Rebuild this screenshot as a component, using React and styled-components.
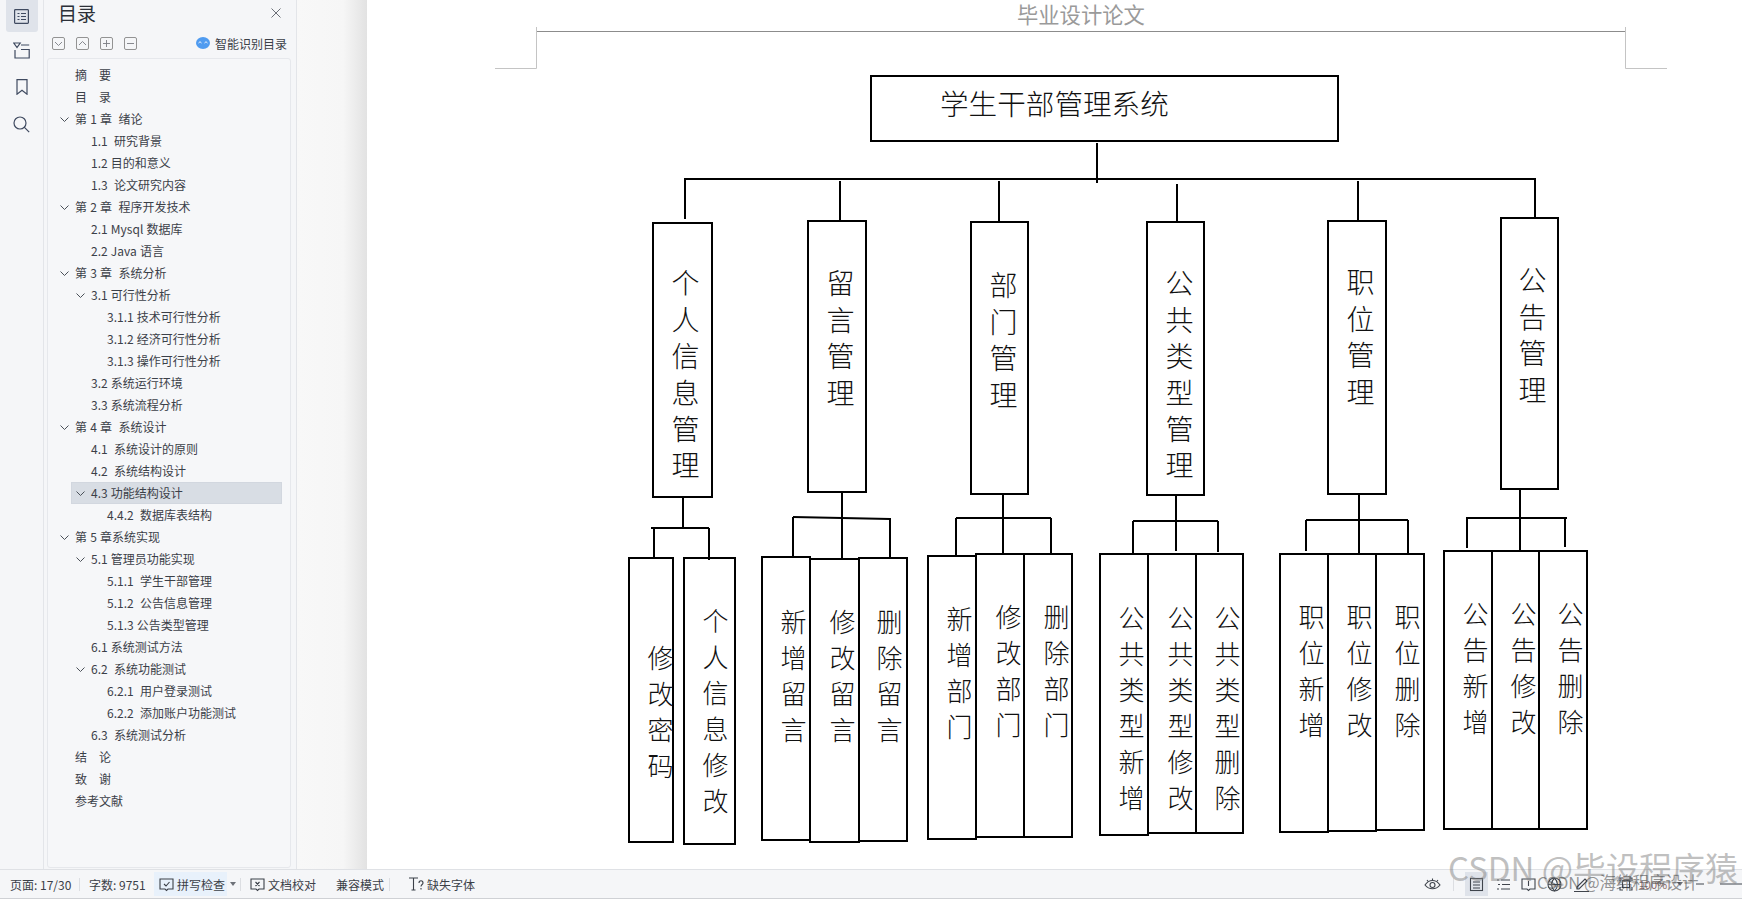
import React from "react";
import styled, { createGlobalStyle } from "styled-components";

const CJK = `"Noto Sans CJK SC", "Noto Sans", sans-serif`;

const Global = createGlobalStyle`
  html, body { margin: 0; padding: 0; height: 100%; overflow: hidden; background: #fff; }
  #root { height: 100%; }
  * { box-sizing: border-box; }
`;

const Shell = styled.div`
  width: 1742px; height: 899px; display: flex; flex-direction: column;
  font-family: ${CJK}; color: #3b4048; position: relative; overflow: hidden;
`;
const Main = styled.div` flex: 1; min-height: 0; display: flex; `;

const Rail = styled.nav`
  width: 44px; background: #f5f6f8; border-right: 1px solid #e3e5e9;
  display: flex; flex-direction: column; align-items: center; flex: none;
`;
const RailBtn = styled.div`
  width: 32px; height: ${p => p.$h}px; display: flex; align-items: center; justify-content: center;
  background: ${p => (p.$active ? "#dfe3ea" : "transparent")};
  border-radius: 0 0 3px 3px; color: #3f4a60;
`;

const Panel = styled.aside`
  width: 253px; flex: none; background: #f5f6f8; border-right: 1px solid #e3e5e9;
  display: flex; flex-direction: column; padding: 0 5px 1px 3px;
`;
const PanelHead = styled.div`
  height: 26px; display: flex; align-items: center; justify-content: space-between; padding: 0 10px 0 11px;
  color: #5b6068;
`;
const PanelTitle = styled.h1` margin: 0; font-size: 19px; font-weight: 400; color: #2c3038; line-height: 26px; `;
const PanelTools = styled.div`
  height: 32px; display: flex; align-items: center; padding: 2px 4px 0 5px; gap: 11px;
`;
const MiniBtn = styled.div`
  width: 13px; height: 13px; border: 1px solid #939393; border-radius: 2px;
  display: flex; align-items: center; justify-content: center; color: #7a7d82;
`;
const Smart = styled.div`
  margin-left: auto; display: flex; align-items: center; gap: 5px; font-size: 12px; color: #3b4048; white-space: nowrap;
`;
const TocBox = styled.div`
  flex: 1; min-height: 0; background: #f6f7f9; border: 1px solid #e6e8ec; border-radius: 3px;
  padding: 5px 8px 0 0;
`;
const TocRow = styled.div`
  height: 22px; margin-left: ${p => 7 + p.$level * 16}px; display: flex; align-items: center;
  font-size: 12px; white-space: pre; word-spacing: 0.5px; color: #3b4048; line-height: 1;
  background: ${p => (p.$selected ? "#d8dde4" : "transparent")};
  box-shadow: ${p => (p.$selected ? "inset 0 0 0 1px #d2d7df" : "none")};
`;
const Caret = styled.span`
  width: 20px; flex: none; display: flex; align-items: center; padding-left: 5px; color: #4a5058;
`;

const Gutter = styled.div`
  width: 70px; flex: none; background: linear-gradient(90deg, #f8f8f8 0%, #f6f6f6 66%, #e2e2e2 100%);
`;
const Page = styled.main` flex: 1; background: #fff; position: relative; overflow: hidden; `;

const HeaderText = styled.div`
  position: absolute; left: 650px; top: 1px; font-size: 21.3px; line-height: 26px;
  color: #9a9a9a; white-space: nowrap;
`;
const Canvas = styled.svg` position: absolute; left: 0; top: 0; `;
const Node = styled.div`
  position: absolute; left: ${p => p.$x - 367}px; top: ${p => p.$y}px;
  width: ${p => p.$w}px; height: ${p => p.$h}px; border: ${p => p.$b || 2.5}px solid #000; background: #fff;
`;
const VText = styled.div`
  position: absolute; left: ${p => p.$cx - 367.5 - p.$fs / 2}px; top: ${p => p.$top - 1.5 - p.$lh / 2}px; width: ${p => p.$fs}px;
  font-size: ${p => p.$fs}px; line-height: ${p => p.$lh}px; color: #111; text-align: center; word-break: break-all;
  font-weight: 300;
`;
const RootText = styled.div`
  position: absolute; left: ${940 - 367}px; top: 83px; font-size: 28.6px; line-height: 40px; color: #111; white-space: nowrap;
  font-weight: 300;
`;

const StatusBar = styled.footer`
  height: 30px; flex: none; background: #f5f6f8; border-top: 1px solid #dfe1e5; border-bottom: 1px solid #cfd1d5;
  display: flex; align-items: center; font-size: 12px; color: #3b4048; white-space: nowrap; padding-left: 1px;
`;
const StatusItem = styled.span`
  display: flex; align-items: center; gap: 3px; height: 24px;
  width: ${p => p.$w}px; flex: none; padding-left: ${p => p.$pl || 0}px;
  background: ${p => (p.$active ? "#e8f1fb" : "transparent")};
`;
const Sep = styled.i` width: 1px; height: 13px; background: #dcdee2; flex: none; `;
const RightIcons = styled.div`
  margin-left: auto; display: flex; align-items: center; height: 24px; color: #3f444c;
`;
const RightIcon = styled.span`
  width: ${p => p.$w}px; height: 24px; flex: none; display: flex; align-items: center; justify-content: center;
  background: ${p => (p.$active ? "#dfe3ea" : "transparent")};
`;
const Zoom = styled.span` font-size: 11px; color: #8a6a6a; width: 30px; flex: none; text-align: center; `;

const Mark = styled.div`
  position: absolute; left: ${p => p.$x}px; top: ${p => p.$y}px; font-size: ${p => p.$fs}px; line-height: 1;
  color: ${p => p.$c}; white-space: nowrap; pointer-events: none;
`;

const Stroke = ({ size = 16, children, sw = 1.1, vb }) => (
  <svg width={size} height={size} viewBox={vb || `0 0 ${size} ${size}`} fill="none" stroke="currentColor" strokeWidth={sw}>{children}</svg>
);

const toc = [
  [0, "摘\u3000要"], [0, "目\u3000录"], [0, "第 1 章  绪论", 1], [1, "1.1  研究背景"], [1, "1.2 目的和意义"], [1, "1.3  论文研究内容"],
  [0, "第 2 章  程序开发技术", 1], [1, "2.1 Mysql 数据库"], [1, "2.2 Java 语言"], [0, "第 3 章  系统分析", 1], [1, "3.1 可行性分析", 1],
  [2, "3.1.1 技术可行性分析"], [2, "3.1.2 经济可行性分析"], [2, "3.1.3 操作可行性分析"], [1, "3.2 系统运行环境"], [1, "3.3 系统流程分析"],
  [0, "第 4 章  系统设计", 1], [1, "4.1  系统设计的原则"], [1, "4.2  系统结构设计"], [1, "4.3 功能结构设计", 1, 1], [2, "4.4.2  数据库表结构"],
  [0, "第 5 章系统实现", 1], [1, "5.1 管理员功能实现", 1], [2, "5.1.1  学生干部管理"], [2, "5.1.2  公告信息管理"], [2, "5.1.3 公告类型管理"],
  [1, "6.1 系统测试方法"], [1, "6.2  系统功能测试", 1], [2, "6.2.1  用户登录测试"], [2, "6.2.2  添加账户功能测试"], [1, "6.3  系统测试分析"],
  [0, "结\u3000论"], [0, "致\u3000谢"], [0, "参考文献"],
];

const midNodes = [
  [652, 222, 61, 276, "个人信息管理", 686, 284], [807, 220, 60, 273, "留言管理", 841, 284], [970, 221, 59, 274, "部门管理", 1004, 286],
  [1146, 221, 59, 275, "公共类型管理", 1180, 284], [1327, 220, 60, 275, "职位管理", 1361, 283], [1500, 217, 59, 273, "公告管理", 1533, 281],
];
const leafNodes = [
  [628, 557, 46, 286, "修改密码", 661, 658], [683, 557, 53, 288, "个人信息修改", 716, 621],
  [761, 556, 50, 285, "新增留言", 794, 622], [858, 557, 50, 285, "删除留言", 890, 622], [809, 558, 51, 285, "修改留言", 843, 622],
  [927, 555, 50, 285, "新增部门", 960, 619], [975, 553, 50, 285, "修改部门", 1009, 617], [1023, 553, 50, 285, "删除部门", 1057, 617],
  [1099, 553, 50, 283, "公共类型新增", 1132, 618], [1195, 553, 49, 281, "公共类型删除", 1228, 618], [1147, 553, 50, 281, "公共类型修改", 1181, 618],
  [1279, 553, 50, 280, "职位新增", 1312, 617], [1375, 553, 50, 278, "职位删除", 1408, 617], [1327, 553, 50, 279, "职位修改", 1360, 617],
  [1443, 550, 50, 280, "公告新增", 1476, 614], [1538, 550, 50, 280, "公告删除", 1571, 614], [1491, 550, 49, 280, "公告修改", 1524, 614],
];
const lines = [
  [1097,143,1097,183],[684,179,1536,179],[685,179,685,219],[840,181,840,220],[999,181,999,221],[1177,184,1177,221],[1358,181,1358,220],[1535,179,1535,217],
  [683,497,683,528],[651,528,709,528],[654,528,654,557],[709,528,709,560],
  [842,492,842,558],[793,517,842,518],[842,518,890,519],[793,517,793,557],[890,518,890,558],
  [1003,494,1003,553],[956,518,1051,518],[956,518,956,555],[1051,518,1051,553],
  [1176,495,1176,551],[1133,521,1218,521],[1133,521,1133,553],[1218,521,1218,552],
  [1359,494,1359,553],[1306,520,1408,520],[1306,520,1306,551],[1408,520,1408,553],
  [1520,490,1520,550],[1466,518,1567,518],[1467,518,1467,548],[1565,518,1565,547],
];

const Chevron = () => (
  <Stroke size={9} sw={1}><path d="M0.5 2.5 L4.5 6.5 L8.5 2.5" /></Stroke>
);

export default function App() {
  return (
    <Shell>
      <Global />
      <Main>
        <Rail>
          <RailBtn $active $h={32}>
            <Stroke size={15} sw={1.2}><rect x="0.6" y="0.6" width="13.8" height="13.8" rx="0.8" /><path d="M3.5 4.5h2M7 4.5h5M3.5 7.5h2M7 7.5h5M3.5 10.5h2M7 10.5h5" /></Stroke>
          </RailBtn>
          <RailBtn $h={36}>
            <Stroke size={17} sw={1.2}><path d="M0.8 1h6.4L4 5.5zM8 3h8.2M2 8v8h14.2V7.5H8" /></Stroke>
          </RailBtn>
          <RailBtn $h={38}>
            <Stroke size={16} sw={1.2}><path d="M3 .6h10v14.6l-5-4-5 4z" /></Stroke>
          </RailBtn>
          <RailBtn $h={36}>
            <Stroke size={17} sw={1.2}><circle cx="7" cy="7" r="6" /><path d="M11.2 11.2l5 5" /></Stroke>
          </RailBtn>
        </Rail>
        <Panel>
          <PanelHead>
            <PanelTitle>目录</PanelTitle>
            <Stroke size={10} sw={0.9}><path d="M.5.5l9 9M9.5.5l-9 9" /></Stroke>
          </PanelHead>
          <PanelTools>
            <MiniBtn><Stroke size={9} sw={0.9}><path d="M1 3l3.5 3.5L8 3" /></Stroke></MiniBtn>
            <MiniBtn><Stroke size={9} sw={0.9}><path d="M1 6l3.5-3.5L8 6" /></Stroke></MiniBtn>
            <MiniBtn><Stroke size={9} sw={0.9}><path d="M4.5 1v7M1 4.5h7" /></Stroke></MiniBtn>
            <MiniBtn><Stroke size={9} sw={0.9}><path d="M1 4.5h7" /></Stroke></MiniBtn>
            <Smart>
              <svg width="14" height="12" viewBox="0 0 14 12">
                <ellipse cx="7" cy="6" rx="7" ry="6" fill="#4f9bf0" />
                <path d="M2.5 6l1.5-1.3L5.5 6M8.5 6L10 4.7 11.5 6" fill="none" stroke="#fff" strokeWidth="0.9" />
              </svg>
              智能识别目录
            </Smart>
          </PanelTools>
          <TocBox>
            {toc.map(([level, text, open, sel], i) => (
              <TocRow key={i} $level={level} $selected={!!sel}>
                <Caret>{open ? <Chevron /> : null}</Caret>
                {text}
              </TocRow>
            ))}
          </TocBox>
        </Panel>
        <Gutter />
        <Page>
          <HeaderText>毕业设计论文</HeaderText>
          <Canvas width="1375" height="869" viewBox="367 0 1375 869">
            <path d="M536.5 27V68.5H495M1625.5 27V68.5H1667" stroke="#c4c4c4" fill="none" />
            <path d="M537 31.5H1625" stroke="#8c8c8c" fill="none" />
          </Canvas>
          <Node $x={870} $y={75} $w={469} $h={67} />
          <RootText>学生干部管理系统</RootText>
          {midNodes.map(([x, y, w, h, t, cx, top]) => (
            <React.Fragment key={t}>
              <Node $x={x} $y={y} $w={w} $h={h} />
              <VText $cx={cx} $top={top} $fs={28} $lh={36.4}>{t}</VText>
            </React.Fragment>
          ))}
          {leafNodes.map(([x, y, w, h]) => (
            <Node key={`${x}-${y}`} $x={x} $y={y} $w={w} $h={h} $b={2} />
          ))}
          {leafNodes.map(([x, y, w, h, t, cx, top]) => (
            <VText key={`${x}-${t}`} $cx={cx} $top={top} $fs={26} $lh={36}>{t}</VText>
          ))}
          <Canvas width="1375" height="869" viewBox="367 0 1375 869">
            {lines.map(([a, b, c, d], i) => (
              <line key={i} x1={a} y1={b} x2={c} y2={d} stroke="#000" strokeWidth="2" />
            ))}
          </Canvas>
        </Page>
      </Main>
      <StatusBar>
        <StatusItem $w={78} $pl={9}>页面: 17/30</StatusItem>
        <Sep />
        <StatusItem $w={74} $pl={9}>字数: 9751</StatusItem>
        <StatusItem $w={73} $pl={5} $active>
          <Stroke size={15}><path d="M1 2h13v10H9l-1.5 1.5L6 12H1zM5 7l2 2 3.5-4" /></Stroke>
          拼写检查
        </StatusItem>
        <StatusItem $w={13} $pl={3}>
          <svg width="6" height="4" viewBox="0 0 6 4"><path d="M0 0h6L3 4z" fill="#6d7178" /></svg>
        </StatusItem>
        <Sep />
        <StatusItem $w={95} $pl={9}>
          <Stroke size={15}><path d="M1 2h13v10H9l-1.5 1.5L6 12H1zM5.5 5l4 4M9.5 5l-4 4" /></Stroke>
          文档校对
        </StatusItem>
        <StatusItem $w={53}>兼容模式</StatusItem>
        <Sep />
        <StatusItem $w={90} $pl={18}>
          <Stroke size={16}><path d="M1 2h9M5.5 2v12M3.5 14h4M11 7c0-3 4-3 4 0 0 1.5-2 1.5-2 3.5M13 12v1.5" /></Stroke>
          缺失字体
        </StatusItem>
        <RightIcons>
          <RightIcon $w={24}>
            <Stroke size={17}><path d="M1 9c4-6 11-6 15 0-4 5-11 5-15 0z" /><circle cx="8.5" cy="9" r="2.5" /><path d="M3 4l1.2 1.5M14 4l-1.2 1.5M8.5 2.5v2" /></Stroke>
          </RightIcon>
          <RightIcon $w={9} />
          <Sep />
          <RightIcon $w={11} />
          <RightIcon $w={23} $active>
            <Stroke size={15}><rect x="1.5" y="1.5" width="12" height="12" /><path d="M4 5h7M4 8h7M4 11h7" /></Stroke>
          </RightIcon>
          <RightIcon $w={30}>
            <Stroke size={15}><path d="M1 3h2M5 3h9M2 7.5h2M6 7.5h8M1 12h2M5 12h9" /></Stroke>
          </RightIcon>
          <RightIcon $w={20}>
            <Stroke size={15}><path d="M1 2h13v10H9l-1.5 1.5L6 12H1zM7.5 4v5" /></Stroke>
          </RightIcon>
          <RightIcon $w={32}>
            <Stroke size={15}><circle cx="7.5" cy="7.5" r="6.5" /><path d="M1 7.5h13M7.5 1c-4 4-4 9 0 13M7.5 1c4 4 4 9 0 13" /></Stroke>
          </RightIcon>
          <RightIcon $w={22}>
            <Stroke size={15}><path d="M0 14.5h15M3 10l8-8 2 2-8 8H3z" /></Stroke>
          </RightIcon>
          <RightIcon $w={22} />
          <RightIcon $w={24}>
            <Stroke size={14}><path d="M1 4V1h3M10 1h3v3M13 10v3h-3M4 13H1v-3" /><rect x="3.5" y="3.5" width="7" height="7" /></Stroke>
          </RightIcon>
          <Zoom>100%</Zoom>
          <RightIcon $w={24}>
            <svg width="6" height="4" viewBox="0 0 6 4"><path d="M0 0h6L3 4z" fill="#6d7178" /></svg>
          </RightIcon>
          <RightIcon $w={16}>
            <svg width="8" height="2" viewBox="0 0 8 2"><path d="M0 1h8" stroke="#3f444c" /></svg>
          </RightIcon>
          <RightIcon $w={12} />
          <RightIcon $w={22}>
            <svg width="22" height="2" viewBox="0 0 22 2"><path d="M0 1h22" stroke="#3f444c" /></svg>
          </RightIcon>
        </RightIcons>
      </StatusBar>
      <Mark $x={1448} $y={851} $fs={33} $c="rgba(130,130,130,0.5)">CSDN @毕设程序猿</Mark>
      <Mark $x={1537} $y={874} $fs={16.5} $c="rgba(60,60,60,0.55)">CSDN @海绵程序设计</Mark>
    </Shell>
  );
}
